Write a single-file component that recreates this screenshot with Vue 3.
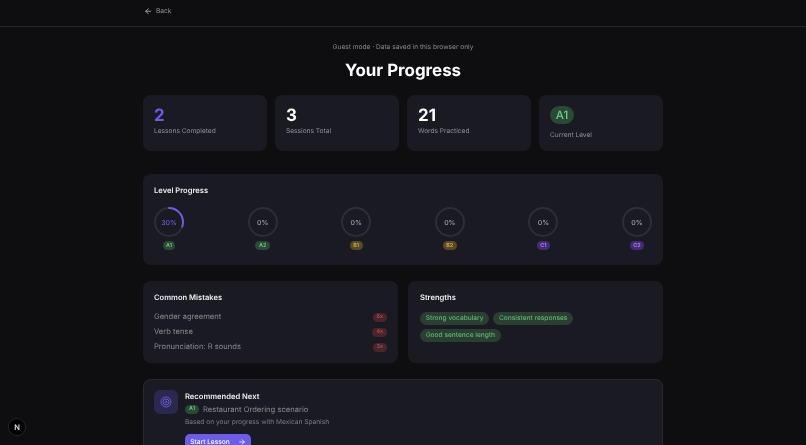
<template>
  <div class="page">
    <header class="topbar">
      <div class="topinner">
        <a class="back">
          <svg class="backicon" viewBox="0 0 24 24" fill="none" stroke="currentColor" stroke-width="2.4" stroke-linecap="round" stroke-linejoin="round"><path d="M19 12H5"/><path d="M12 19l-7-7 7-7"/></svg>
          <span>Back</span>
        </a>
      </div>
    </header>
    <main class="content">
      <p class="guest">Guest mode · Data saved in this browser only</p>
      <h1 class="title">Your Progress</h1>

      <section class="stats">
        <div class="card stat"><div class="num purple">2</div><div class="lab">Lessons Completed</div></div>
        <div class="card stat"><div class="num">3</div><div class="lab">Sessions Total</div></div>
        <div class="card stat"><div class="num">21</div><div class="lab">Words Practiced</div></div>
        <div class="card stat"><div class="levelpill">A1</div><div class="lab lab2">Current Level</div></div>
      </section>

      <section class="card levels">
        <h2 class="h">Level Progress</h2>
        <div class="rings">
          <div v-for="l in levels" :key="l.name" class="ringitem">
            <div class="ring">
              <svg viewBox="0 0 30 30" class="ringsvg">
                <circle cx="15" cy="15" r="14" fill="none" stroke="#2e2e39" stroke-width="2"/>
                <circle v-if="l.pct" cx="15" cy="15" r="14" fill="none" stroke="#6c5ce7" stroke-width="2" stroke-linecap="round" :stroke-dasharray="dash(l.pct)" transform="rotate(-90 15 15)"/>
              </svg>
              <span class="pct" :class="{ purplepct: l.pct }">{{ l.pct }}%</span>
            </div>
            <span class="tag" :class="l.kind">{{ l.name }}</span>
          </div>
        </div>
      </section>

      <section class="two">
        <div class="card mistakes">
          <h2 class="h">Common Mistakes</h2>
          <div class="mlist">
            <div v-for="m in mistakes" :key="m.t" class="mrow">
              <span>{{ m.t }}</span><span class="count">{{ m.c }}</span>
            </div>
          </div>
        </div>
        <div class="card strengths">
          <h2 class="h">Strengths</h2>
          <div class="chips">
            <span v-for="s in strengths" :key="s" class="chip">{{ s }}</span>
          </div>
        </div>
      </section>

      <section class="card rec">
        <div class="recicon">
          <svg viewBox="0 0 24 24" fill="none" stroke="#6459d8" stroke-width="2" class="target"><circle cx="12" cy="12" r="10"/><circle cx="12" cy="12" r="6"/><circle cx="12" cy="12" r="2"/></svg>
        </div>
        <div class="recbody">
          <h2 class="rectitle">Recommended Next</h2>
          <div class="recline"><span class="tag green">A1</span><span>Restaurant Ordering scenario</span></div>
          <p class="recsub">Based on your progress with Mexican Spanish</p>
          <button class="start"><span>Start Lesson</span>
            <svg class="arrow" viewBox="0 0 24 24" fill="none" stroke="currentColor" stroke-width="2.4" stroke-linecap="round" stroke-linejoin="round"><path d="M5 12h14"/><path d="M12 5l7 7-7 7"/></svg>
          </button>
        </div>
      </section>
    </main>
    <div class="nextbadge"><span>N</span></div>
  </div>
</template>

<script setup>
const C = 2 * Math.PI * 14
const dash = (p) => `${(C * p) / 100} ${C}`
const levels = [
  { name: 'A1', pct: 30, kind: 'green' },
  { name: 'A2', pct: 0, kind: 'green' },
  { name: 'B1', pct: 0, kind: 'amber' },
  { name: 'B2', pct: 0, kind: 'amber' },
  { name: 'C1', pct: 0, kind: 'violet' },
  { name: 'C2', pct: 0, kind: 'violet' }
]
const mistakes = [
  { t: 'Gender agreement', c: '6x' },
  { t: 'Verb tense', c: '4x' },
  { t: 'Pronunciation: R sounds', c: '3x' }
]
const strengths = ['Strong vocabulary', 'Consistent responses', 'Good sentence length']
</script>

<style>
html, body { margin: 0; background: #0e0e11; overflow: hidden; }
</style>

<style scoped>
.page {
  position: relative;
  height: 445px;
  overflow: hidden;
  background: #0e0e11;
  color: #fff;
  font-family: Inter, "Liberation Sans", sans-serif;
  text-rendering: geometricPrecision;
  filter: blur(0.25px);
}
.topbar { height: 27px; box-sizing: border-box; border-bottom: 1px solid #25252b; }
.topinner { width: 520px; margin: 0 auto; height: 100%; display: flex; align-items: center; }
.back { display: flex; align-items: center; gap: 4px; color: #93939b; font-size: 6.6px; padding-left: 0.5px; padding-bottom: 4px; }
.backicon { width: 8.5px; height: 8.5px; color: #b0b0b8; }
.content { width: 520px; margin: 0 auto; display: flex; flex-direction: column; }
.guest { margin: 15px 0 0; text-align: center; font-size: 6.6px; line-height: 10px; color: #8a8a92; }
.title { margin: 7px 0 0; text-align: center; font-size: 16.9px; line-height: 24px; font-weight: 700; }
.stats { display: grid; grid-template-columns: repeat(4, 1fr); gap: 8px; margin-top: 12px; }
.card { background: #1a1a22; border-radius: 7.5px; box-sizing: border-box; }
.stat { height: 56px; padding: 11px 11px 0; }
.num { font-size: 16.9px; line-height: 20px; font-weight: 700; }
.purple { color: #6c5ce7; }
.lab { font-size: 6.6px; line-height: 10px; color: #90909a; margin-top: 0; }
.lab2 { margin-top: 6px; }
.levelpill { width: 24px; height: 18px; border-radius: 10px; background: #2a4a35; color: #6fcf87; font-size: 11.5px; font-weight: 500; display: flex; align-items: center; justify-content: center; }
.levels { margin-top: 23px; height: 91px; padding: 11px; }
.h { margin: 0; font-size: 7.6px; line-height: 12px; font-weight: 600; color: #ececf0; }
.rings { display: flex; justify-content: space-between; margin-top: 10px; }
.ringitem { display: flex; flex-direction: column; align-items: center; gap: 4px; width: 30px; }
.ring { position: relative; width: 30px; height: 30px; }
.ringsvg { width: 30px; height: 30px; display: block; }
.pct { position: absolute; inset: 0; display: flex; align-items: center; justify-content: center; font-size: 6.9px; font-weight: 500; color: #a0a0a8; }
.purplepct { color: #6c5ce7; }
.tag { display: inline-flex; align-items: center; justify-content: center; height: 9px; padding: 0 3.5px; border-radius: 5px; font-size: 5.4px; font-weight: 600; }
.green { background: #2a4a35; color: #6fcf87; }
.amber { background: #5a4a24; color: #d0b05a; }
.violet { background: #452a78; color: #b08de8; }
.two { display: grid; grid-template-columns: 255px 255px; gap: 10px; margin-top: 16px; }
.mistakes, .strengths { height: 82px; padding: 11px; }
.strengths { padding-left: 12px; }
.mlist { margin-top: 8px; display: flex; flex-direction: column; gap: 5px; }
.mrow { display: flex; justify-content: space-between; align-items: center; font-size: 7.6px; line-height: 10px; color: #8a8a92; }
.count { height: 9px; padding: 0 4px; border-radius: 5px; background: #4d2429; color: #a9585d; font-size: 5.4px; line-height: 9px; font-weight: 500; }
.chips { display: flex; flex-wrap: wrap; gap: 4px; margin-top: 8px; }
.chip { height: 13px; padding: 0 5.7px; border-radius: 7px; background: #2a3f31; color: #5fb877; font-size: 6.6px; line-height: 13px; font-weight: 500; }
.rec { margin-top: 16px; height: 90px; padding: 10px; display: flex; gap: 7px; border: 1px solid #292931; }
.recicon { width: 24px; height: 24px; border-radius: 6px; background: #2b2850; display: flex; align-items: center; justify-content: center; flex: none; }
.target { width: 12px; height: 12px; }
.recbody { flex: 1; }
.rectitle { margin: 1px 0 0; font-size: 7.6px; line-height: 12px; font-weight: 600; color: #ececf0; }
.recline { display: flex; align-items: center; gap: 4px; font-size: 7.6px; line-height: 13px; color: #8a8a92; }
.recline .tag { padding: 0 4px; }
.recsub { margin: 1px 0 0; font-size: 6.6px; line-height: 10px; color: #7c7c86; }
.start { margin-top: 7px; width: 66px; height: 22px; border: 0; border-radius: 5px; background: #6c5ce7; color: #fff; font: 500 6.6px Inter, sans-serif; text-rendering: geometricPrecision; display: flex; align-items: flex-start; justify-content: center; gap: 8px; padding: 4px 0 0; }
.arrow { width: 8px; height: 8px; }
.nextbadge { position: absolute; left: 9px; top: 419px; width: 16px; height: 16px; border-radius: 50%; background: #000; box-shadow: 0 0 0 1px #26262a; display: flex; align-items: center; justify-content: center; }
.nextbadge span { font-size: 7.5px; font-weight: 600; color: #e0e0e0; }
</style>
